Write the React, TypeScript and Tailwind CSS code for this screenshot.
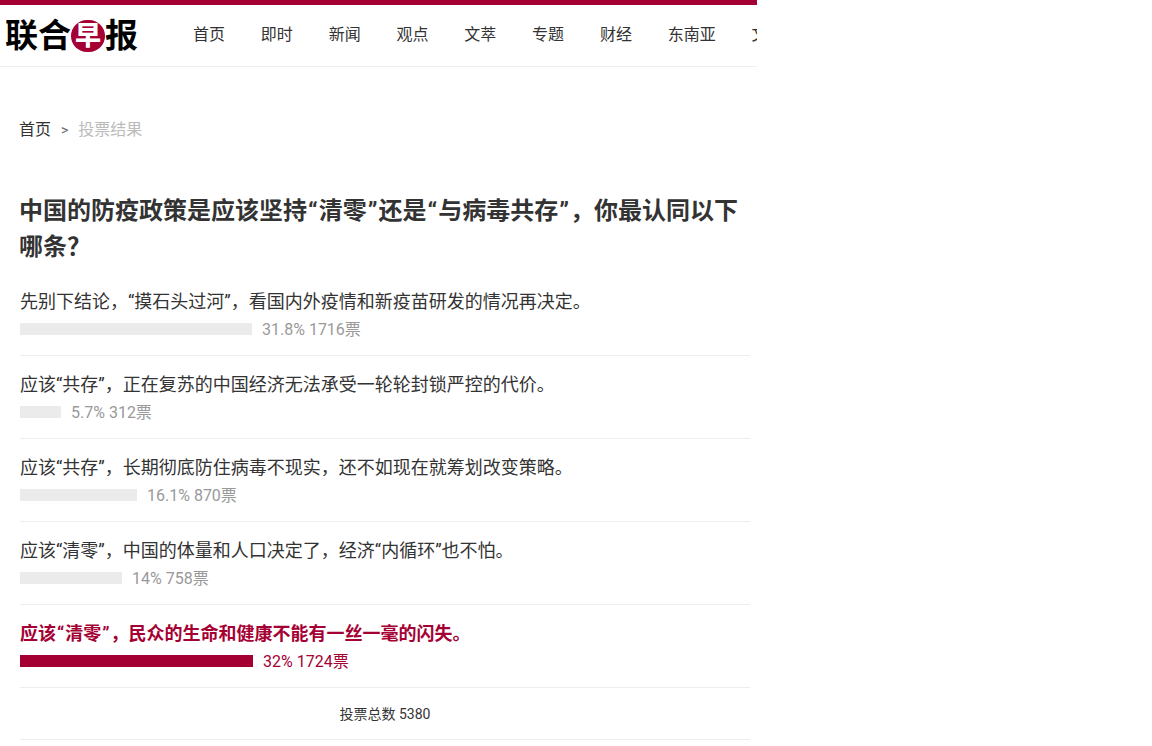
const FONT = "font-['Roboto','Noto_Sans_CJK_SC',sans-serif]";

const nav = ["首页", "即时", "新闻", "观点", "文萃", "专题", "财经", "东南亚", "文化"];

const options = [
  { text: "先别下结论，“摸石头过河”，看国内外疫情和新疫苗研发的情况再决定。", width: "w-[232px]", stat: "31.8% 1716票" },
  { text: "应该“共存”，正在复苏的中国经济无法承受一轮轮封锁严控的代价。", width: "w-[41px]", stat: "5.7% 312票" },
  { text: "应该“共存”，长期彻底防住病毒不现实，还不如现在就筹划改变策略。", width: "w-[117px]", stat: "16.1% 870票" },
  { text: "应该“清零”，中国的体量和人口决定了，经济“内循环”也不怕。", width: "w-[102px]", stat: "14% 758票" },
];

function Q({ children }: { children: string }) {
  return <span className="px-[1px]">{children}</span>;
}

export default function App() {
  return (
    <div className={`${FONT} w-[757px] h-[746px] overflow-hidden bg-white text-[#333]`}>
      <div className="h-[5px] bg-[#a50034]" />
      <header className="h-[62px] border-b border-[#eeeeee] flex items-center whitespace-nowrap">
        <div className="w-[193px] shrink-0 flex items-center pl-[5px] text-[33px] leading-none font-bold text-black">
          <span>联合</span>
          <span className="w-[34px] h-[32px] rounded-full bg-[#a50034] text-white text-[26px] font-black flex items-center justify-center">早</span>
          <span>报</span>
        </div>
        <nav className="flex gap-[35.8px] text-[16px] leading-[24px] mb-[2px] text-[#333]">
          {nav.map((n) => (
            <span key={n}>{n}</span>
          ))}
        </nav>
      </header>

      <main className="pl-[20px] w-[750px]">
        <div className="pt-[51px] flex items-center text-[16px] leading-[24px]">
          <span className="-ml-px">首页</span>
          <span className="mx-[10px] text-[14px] text-[#666]">&gt;</span>
          <span className="text-[#bbbbbb]">投票结果</span>
        </div>

        <h1 className="mt-[51px] text-[24px] leading-[36px] font-bold text-[#333] -ml-px">
          中国的防疫政策是应该坚持<Q>“</Q>清零<Q>”</Q>还是<Q>“</Q>与病毒共存<Q>”</Q>，你最认同以下哪条？
        </h1>

        <div className="mt-[8px]">
          {options.map((o) => (
            <div key={o.text} className="h-[83px] border-b border-[#eeeeee] pt-[15px]">
              <p className="text-[18px] leading-[27px]">{o.text}</p>
              <div className="mt-[2px] flex items-center h-[24px]">
                <div className={`${o.width} h-[12px] bg-[#ebebeb]`} />
                <span className="ml-[10px] pt-[2px] text-[16px] text-[#999999]">{o.stat}</span>
              </div>
            </div>
          ))}
          <div className="h-[83px] border-b border-[#eeeeee] pt-[15px] text-[#a50034]">
            <p className="text-[18px] leading-[27px] font-bold">应该<Q>“</Q>清零<Q>”</Q>，民众的生命和健康不能有一丝一毫的闪失。</p>
            <div className="mt-[2px] flex items-center h-[24px]">
              <div className="w-[233px] h-[12px] bg-[#a50034]" />
              <span className="ml-[10px] pt-[2px] text-[16px]">32% 1724票</span>
            </div>
          </div>
        </div>

        <div className="h-[52px] border-b border-[#eeeeee] flex items-center justify-center pt-[2px] text-[14px] text-[#333]">
          投票总数 5380
        </div>
      </main>
    </div>
  );
}
